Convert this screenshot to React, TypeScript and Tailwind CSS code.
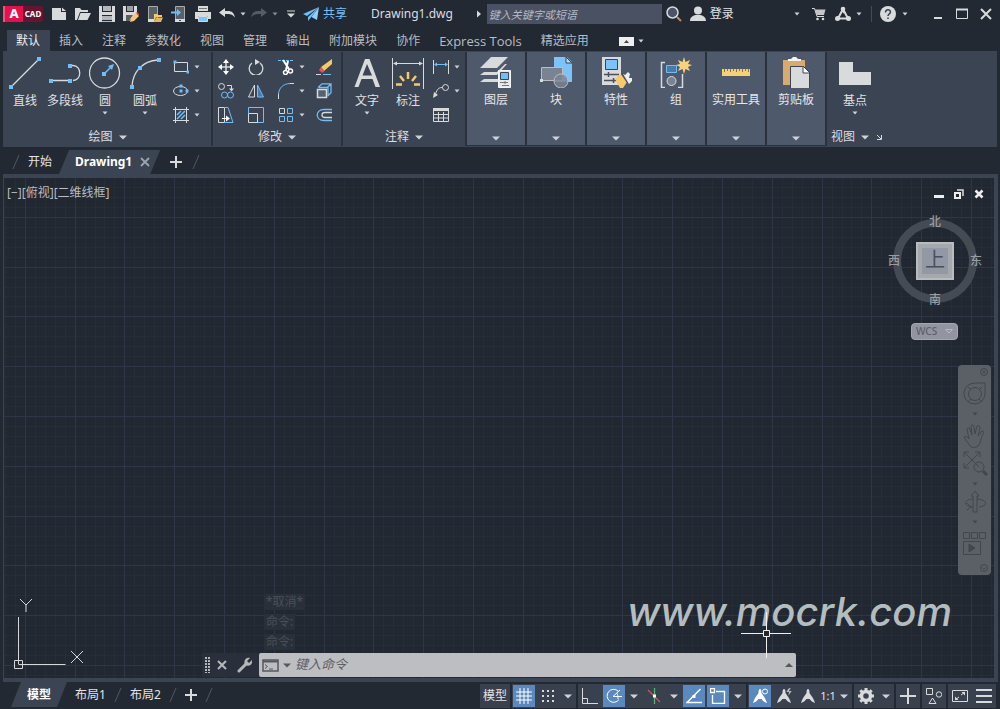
import { useState } from 'react'
import type { ReactNode } from 'react'

const LIGHT = '#d9dadb'
const BLUE = '#70bdf8'
const AMBER = '#f7c86c'
const SLATE = '#3b4453'

interface IconProps {
  w?: number
  h?: number
  children: ReactNode
}

function Icon({ w = 16, h = 16, children }: IconProps) {
  return (
    <svg width={w} height={h} viewBox={`0 0 ${w} ${h}`} fill="none" stroke={LIGHT} className="shrink-0" aria-hidden="true">
      {children}
    </svg>
  )
}

function Dots({ at, size = 4 }: { at: [number, number][]; size?: number }) {
  return (
    <>
      {at.map(([x, y]) => (
        <rect key={`${x}-${y}`} x={x - size / 2} y={y - size / 2} width={size} height={size} fill={BLUE} stroke="none" />
      ))}
    </>
  )
}

function Caret({ large = false, fill = '#d0d2d5' }: { large?: boolean; fill?: string }) {
  return large ? (
    <svg width="8" height="5" viewBox="0 0 8 5" className="shrink-0" aria-hidden="true"><path d="M0 .5h8l-4 4z" fill={fill} /></svg>
  ) : (
    <svg width="6" height="4" viewBox="0 0 6 4" className="shrink-0" aria-hidden="true"><path d="M.5.5h5l-2.500 3z" fill={fill} /></svg>
  )
}

/* ---------- Title bar ---------- */

const FILE_TOOLS: { label: string; icon: ReactNode }[] = [
  { label: '新建', icon: <Icon><path d="M1 2h9v4h5v8H1z" fill={LIGHT} stroke="none" /><path d="M11 1.5 15 5h-4z" fill={LIGHT} stroke="none" /></Icon> },
  { label: '打开', icon: <Icon><path d="M0 14V2h5l1.5 2H13v2H5L2 14z" fill={LIGHT} stroke="none" /><path d="M5.5 7H16l-3.500 7H3z" fill={LIGHT} stroke="none" /></Icon> },
  { label: '保存', icon: <Icon><path d="M0 0h3v6h10V0h3v16H0z" fill={LIGHT} stroke="none" /><path d="M4 0h8v5H4zM3 10h10v6H3z" fill="#b4b6b9" stroke="none" /><path d="M3 9.5h10M3 14.5h10" stroke="#232a34" /></Icon> },
  { label: '另存为', icon: <Icon><path d="M0 0h3v6h8V0h3v8L6 15H0z" fill={LIGHT} stroke="none" /><path d="M4 0h6v5H4z" fill="#9b9ea3" stroke="none" /><path d="M3 9h7l-4 6H3z" fill="#5a606a" stroke="none" /><path d="m7 16 1-4 5-5 3 3-5 5z" fill={AMBER} stroke="none" /><path d="m13 7 1-1 3 3-1 1z" fill="#e04a50" stroke="none" /></Icon> },
  { label: '从移动设备打开', icon: <Icon><path d="M1.5.5h9v15h-9z" fill="#5a606a" stroke="#aaa" /><path d="M1 13h6v3H1z" fill={LIGHT} stroke="none" /><path d="M7 8h3l1 1h4v2H9l-2 5z" fill={AMBER} stroke="none" /><path d="M9.5 11.5H16L14 16H7z" fill="#e5b55f" stroke="none" /></Icon> },
  { label: '保存到移动设备', icon: <Icon><path d="M4.5.5h9v15h-9z" fill="#5a606a" stroke="#aaa" /><path d="M4 13h10v3H4z" fill={LIGHT} stroke="none" /><path d="M8 14.5h2" stroke="#444" /><path d="M0 6.5h7" stroke={BLUE} strokeWidth="2" /><path d="m6 3 4 3.5L6 10z" fill={BLUE} stroke="none" /></Icon> },
  { label: '打印', icon: <Icon><path d="M3 0h10v5H3zM0 6h16v7h-3v-3H3v3H0z" fill={LIGHT} stroke="none" /><path d="M4 2.5h8" stroke="#777" /><path d="M3.5 10.5h9v5h-9z" fill="#7cc6ff" stroke={LIGHT} /></Icon> },
]

function TitleBar() {
  return (
    <header className="flex h-7 items-center pl-[3px]">
      <button aria-label="AutoCAD" className="mr-1 flex h-4 w-10 items-center rounded-xs bg-[#6a1330] text-white">
        <span className="flex h-full w-5 items-center justify-center border-l-2 border-[#f0527a] bg-[#e5104e] text-[13px] font-extrabold">A</span>
        <span className="flex-1 text-center text-[8px] font-bold">CAD</span>
      </button>
      {FILE_TOOLS.map((tool) => (
        <button key={tool.label} aria-label={tool.label} className="flex h-6 w-6 items-center justify-center">{tool.icon}</button>
      ))}
      <button aria-label="放弃" className="flex h-6 w-6 items-center justify-center">
        <Icon><path d="M0 6.5 6 2v3h3c4 0 6 2 7 6.500C14 9 12 8 9 8H6v3z" fill={LIGHT} stroke="none" /></Icon>
      </button>
      <button aria-label="放弃列表" className="flex w-2 justify-center"><Caret /></button>
      <button aria-label="重做" className="flex h-6 w-6 items-center justify-center">
        <Icon><path d="M16 6.5 10 2v3H7c-4 0-6 2-7 6.500C2 9 4 8 7 8h3v3z" fill="#545c68" stroke="none" /></Icon>
      </button>
      <button aria-label="重做列表" className="flex w-2 justify-center opacity-60"><Caret /></button>
      <button aria-label="自定义快速访问工具栏" className="flex h-6 w-6 items-center justify-center">
        <Icon w={8} h={8}><path d="M0 1h8" /><path d="M0 3.5h8l-4 4z" fill={LIGHT} stroke="none" /></Icon>
      </button>
      <button className="flex items-center gap-1 text-[12px] leading-4 text-[#78bdf0]">
        <Icon><path d="M16 1 0 8l4 2zM16 1 5 11v4l2.500-3z" fill={BLUE} stroke="none" /><path d="m16 1-2 13-5.500-3z" fill="#8fd0ff" stroke="none" /></Icon>
        共享
      </button>
      <h1 className="ml-6 text-[12px] leading-4 text-[#dcdde0]">Drawing1.dwg</h1>
      <div className="ml-6 flex items-center gap-1.5">
        <svg width="4" height="8" viewBox="0 0 4 8" aria-hidden="true"><path d="M0 .5 4 4 0 7.5z" fill={LIGHT} /></svg>
        <input
          type="text"
          aria-label="搜索"
          placeholder="键入关键字或短语"
          className="h-5 w-[175px] bg-[#495163] px-0.5 text-[11px] italic text-white outline-none placeholder:text-[#b5bac4]"
        />
      </div>
      <button aria-label="查找" className="flex h-6 w-6 items-center justify-center">
        <Icon><circle cx="6.5" cy="6.5" r="5.5" fill="#4c5565" strokeWidth="1.5" /><path d="m11 11 4 4" stroke="#c98a4e" strokeWidth="2" /></Icon>
      </button>
      <button className="ml-1 flex items-center gap-1 text-[12px] leading-4 text-[#e3e4e6]">
        <Icon><circle cx="8" cy="4.5" r="4" fill={LIGHT} stroke="none" /><path d="M0 15c0-4 3-5 5-6h6c2 1 5 2 5 6z" fill={LIGHT} stroke="none" /></Icon>
        登录
      </button>
      <div className="ml-auto flex items-center pr-1">
        <button aria-label="帐户" className="mr-1 flex w-3 justify-center"><Caret /></button>
        <button aria-label="应用商店" className="flex h-6 w-6 items-center justify-center">
          <Icon w={14} h={14}><path d="M0 1.5h2.500L5 9.5h7" /><path d="M3 2.5h10.500L12 8H4.500z" fill="#c4c6c9" stroke="none" /><circle cx="5.5" cy="12" r="1.3" fill={LIGHT} stroke="none" /><circle cx="11" cy="12" r="1.3" fill={LIGHT} stroke="none" /></Icon>
        </button>
        <button aria-label="Autodesk" className="flex h-6 w-6 items-center justify-center">
          <Icon><path d="M8 3 3 12.5h10zM8 3l1 4" strokeWidth="2" /><circle cx="8" cy="3" r="2.3" fill={LIGHT} stroke="none" /><circle cx="2.5" cy="12.5" r="2.5" fill={LIGHT} stroke="none" /><circle cx="13.5" cy="12.5" r="2.5" fill={LIGHT} stroke="none" /></Icon>
        </button>
        <button aria-label="Autodesk 列表" className="flex w-2 justify-center"><Caret /></button>
        <span className="mx-2 h-4 w-px bg-[#454c58]" />
        <button aria-label="帮助" className="flex h-6 items-center gap-1.5">
          <Icon><circle cx="8" cy="8" r="8" fill={LIGHT} stroke="none" /><path d="M5.5 6.5c0-3.500 5-3.500 5-.5 0 2-2.500 1.800-2.500 4M8 11.5V13" stroke={SLATE} strokeWidth="1.5" /></Icon>
          <Caret />
        </button>
        <button aria-label="最小化" className="ml-4 flex h-6 w-6 items-center justify-center pl-1"><Icon w={8} h={12}><path d="M0 10h8" strokeWidth="2" /></Icon></button>
        <button aria-label="最大化" className="flex h-6 w-6 items-center justify-center pl-1"><Icon w={12} h={12}><path d="M.5 1.5h11v9H.5z" /><path d="M0 1.5h12" strokeWidth="2" /></Icon></button>
        <button aria-label="关闭" className="flex h-6 w-6 items-center justify-center pl-1"><Icon w={12} h={12}><path d="m1 1 10 10m0-10L1 11" strokeWidth="2" /></Icon></button>
      </div>
    </header>
  )
}

/* ---------- Ribbon ---------- */

const RIBBON_TABS = ['默认', '插入', '注释', '参数化', '视图', '管理', '输出', '附加模块', '协作', 'Express Tools', '精选应用']

function RibbonTabs({ active, onSelect }: { active: string; onSelect: (t: string) => void }) {
  return (
    <nav className="flex h-[23px] items-end pl-[7px]">
      {RIBBON_TABS.map((tab) => (
        <button
          key={tab}
          onClick={() => onSelect(tab)}
          className={`h-[21px] pt-px pr-[10px] pl-[9px] leading-5 whitespace-nowrap ${
            tab === active ? 'bg-[#3b4453] text-[#eceded]' : 'text-[#b9bcc1]'
          } ${tab === 'Express Tools' ? "font-['Open_Sans',sans-serif] text-[13px]" : 'text-[12px]'}`}
        >
          {tab}
        </button>
      ))}
      <button aria-label="最小化功能区" className="ml-5 flex h-5 items-center gap-1">
        <Icon w={15} h={9}><rect width="15" height="9" fill="#eee" stroke="none" /><path d="m5 6 2.500-3L10 6z" fill="#444" stroke="none" /></Icon>
        <Caret />
      </button>
    </nav>
  )
}

interface ToolProps {
  label: string
  icon: ReactNode
  menu?: boolean
}

function LargeTool({ label, icon, menu = false }: ToolProps) {
  return (
    <button className="flex w-10 flex-col items-center pt-[5px] text-[12px] leading-4 whitespace-nowrap text-[#e0e1e3]">
      {icon}
      <span className="mt-1">{label}</span>
      {menu && <span className="mt-0.5"><Caret /></span>}
    </button>
  )
}

function SmallTool({ label, icon, menu = false }: ToolProps) {
  return (
    <div className="flex h-6 items-center">
      <button aria-label={label} className="flex h-6 w-6 items-center justify-center">{icon}</button>
      {menu && <button aria-label={`${label}列表`} className="flex w-2 justify-center"><Caret /></button>}
    </div>
  )
}

function Panel({ title, children }: { title: string; children: ReactNode }) {
  return (
    <section className="flex flex-col border-r-2 border-[#2a313c] bg-[#3b4453]">
      <div className="flex flex-1">{children}</div>
      <button className="flex h-[18px] items-center justify-center gap-1.5 text-[12px] leading-4 text-[#dcdde0]">
        {title}
        <Caret large />
      </button>
    </section>
  )
}

function FoldedPanel({ title, icon }: { title: string; icon: ReactNode }) {
  return (
    <button className="mb-px flex w-[58px] flex-col items-center bg-[#4e596c] pt-1 pb-1 text-[12px] leading-4 whitespace-nowrap text-[#e6e7e9]">
      {icon}
      <span className="mt-1">{title}</span>
      <span className="mt-auto"><Caret large /></span>
    </button>
  )
}

function DrawPanel() {
  return (
    <Panel title="绘图">
      <div className="flex gap-1 pr-2.5 pl-px">
        <div className="flex">
          <LargeTool label="直线" icon={<Icon w={32} h={32}><path d="M3 29 29 3" strokeWidth="1.3" /><Dots at={[[2, 30], [30, 2]]} /></Icon>} />
          <LargeTool label="多段线" icon={<Icon w={32} h={32}><path d="M2 23.5h20M21 8.5h3c9 0 9 15 0 15" strokeWidth="1.3" /><Dots at={[[2, 24], [21, 24], [21, 9]]} /></Icon>} />
          <LargeTool menu label="圆" icon={<Icon w={32} h={32}><circle cx="15.5" cy="16" r="15" strokeWidth="1.3" /><path d="m15 17 7-7" stroke={BLUE} strokeWidth="1.5" /><path d="m25 7-6 2 4 4z" fill={BLUE} stroke="none" /><Dots at={[[15, 17]]} /></Icon>} />
          <LargeTool menu label="圆弧" icon={<Icon w={32} h={32}><path d="M3 29C4 15 13 4 29 3" strokeWidth="1.3" /><Dots at={[[3, 30], [11, 11], [30, 3]]} /></Icon>} />
        </div>
        <div className="flex flex-col pt-[3px]">
          <SmallTool menu label="矩形" icon={<Icon><path d="M1.5 3.5h13v9h-13z" /><Dots at={[[2, 3], [15, 13]]} size={3} /></Icon>} />
          <SmallTool menu label="椭圆" icon={<Icon><ellipse cx="7.5" cy="8" rx="7" ry="4.5" /><Dots at={[[8, 3], [8, 8], [14, 8]]} size={3} /></Icon>} />
          <SmallTool menu label="图案填充" icon={<Icon><path d="M0 2.5h16M0 13.5h16M2.5 0v16M13.5 0v16" /><path d="m4 8 4-4M4 12l8-8M8 12l4-4" stroke={BLUE} strokeWidth="1.5" /></Icon>} />
        </div>
      </div>
    </Panel>
  )
}

function ModifyPanel() {
  return (
    <Panel title="修改">
      <div className="flex gap-1.5 pt-[3px] pr-[5px] pl-px">
        <div>
          <SmallTool label="移动" icon={<Icon><path d="M8 2v12M2 8h12" strokeWidth="1.5" /><path d="m8 0 3 4H5zM8 16l3-4H5zM0 8l4-3v6zM16 8l-4-3v6z" fill="#fff" stroke="none" /></Icon>} />
          <SmallTool label="复制" icon={<Icon><circle cx="3.5" cy="3.5" r="3" /><path d="M9 2.5h4.500V6" /><path d="m11 5.5 2.500 3 2.500-3z" fill={LIGHT} stroke="none" /><g stroke={BLUE}><circle cx="6.5" cy="12" r="3" /><circle cx="12.5" cy="12" r="3" /></g></Icon>} />
          <SmallTool label="拉伸" icon={<Icon><path d="M.5.5h6v15h-6z" /><path d="M6 .5h4l5 15H6" stroke={BLUE} /><path d="M4 11.5h5" stroke="#fff" /><path d="m8 8.5 4 3-4 3z" fill="#fff" stroke="none" /></Icon>} />
        </div>
        <div>
          <SmallTool label="旋转" icon={<Icon><path d="M4 4a6.800 6.800 0 1 0 8 0" strokeWidth="1.3" /><path d="m7 0 5 3-5 3z" fill={LIGHT} stroke="none" /></Icon>} />
          <SmallTool label="镜像" icon={<Icon><path d="M6.5 2v12h-6z" /><path d="M9.5 2v12h6z" stroke={BLUE} fill="#477aa5" /></Icon>} />
          <SmallTool label="缩放" icon={<Icon><path d="M.5 6V.5h15v15H9" stroke={BLUE} /><path d="M.5 6.5h9v9h-9z" /></Icon>} />
        </div>
        <div>
          <SmallTool menu label="修剪" icon={<Icon><path d="M0 1.5h16" stroke={BLUE} strokeDasharray="3 1" /><path d="m5 1 6 9M10 2 8 11" stroke="#fff" strokeWidth="2" /><circle cx="12.5" cy="12" r="2" stroke="#fff" strokeWidth="1.5" /><circle cx="7.5" cy="13.5" r="2" stroke="#fff" strokeWidth="1.5" /></Icon>} />
          <SmallTool menu label="圆角" icon={<Icon><path d="M.5 16v-5M12 .5h4" /><path d="M.5 11C1 5 5 .8 12 .5" stroke={BLUE} /></Icon>} />
          <SmallTool menu label="阵列" icon={<Icon><path d="M1.5 1.5h5v5h-5z" /><path d="M9.5 1.5h5v5h-5zM1.5 9.5h5v5h-5zM9.5 9.5h5v5h-5z" stroke={BLUE} /></Icon>} />
        </div>
        <div>
          <SmallTool label="删除" icon={<Icon><path d="M16 0v5L8 12 5 8z" fill={AMBER} stroke="none" /><path d="m5 8 3.500 4L6 14l-3-3z" fill="#e2565c" stroke="none" /><path d="M0 15.5h5" /><path d="M7 15.5h8" stroke={BLUE} /></Icon>} />
          <SmallTool label="分解" icon={<Icon><path d="M1.500 6.500h9v8h-9z" fill="#566070" strokeWidth="1.5" /><path d="M2 4.500 6 .8h9v9l-3.500 3.500M15 .8l-4 4M3 4.500h9v9" stroke={BLUE} strokeWidth="1.3" /></Icon>} />
          <SmallTool label="偏移" icon={<Icon><path d="M16 2.500H8c-9 0-9 11 0 11h8" stroke={BLUE} strokeWidth="1.3" /><path d="M16 5.500H9c-4 0-4 5 0 5h7" strokeWidth="1.3" /></Icon>} />
        </div>
      </div>
    </Panel>
  )
}

function AnnotatePanel() {
  return (
    <Panel title="注释">
      <div className="flex gap-px px-1">
        <LargeTool menu label="文字" icon={<Icon w={32} h={32}><path d="M14 2h4.500l10.500 28h-4.500l-3-8h-11l-3 8H3.500zm2 5-4.500 11.500h9.500z" fill={LIGHT} stroke="none" /></Icon>} />
        <LargeTool label="标注" icon={<Icon w={32} h={32}><path d="M.5 1v31M31.500 1v31M2 6.500h28" /><path d="m1 6.500 4-2v4zM31 6.500l-4-2v4z" fill={LIGHT} stroke="none" /><path d="M16 15v7M8 19l4 5M24 19l-4 5M4 27.500h6M22 27.500h6" stroke={AMBER} strokeWidth="2.5" /></Icon>} />
        <div className="pt-[3px]">
          <SmallTool menu label="线性标注" icon={<Icon><path d="M.5 1v14M15.500 1v14" /><path d="M2 5.500h12" stroke={BLUE} /><path d="m1 5.500 3-2v4zM15 5.500l-3-2v4z" fill={BLUE} stroke="none" /></Icon>} />
          <SmallTool menu label="引线" icon={<Icon><circle cx="12.5" cy="4.5" r="3" /><path d="M9.500 4.500C4 4.500 4 8 2 12" /><path d="m0 15 1-6 4 3z" fill={LIGHT} stroke="none" /></Icon>} />
          <SmallTool label="表格" icon={<Icon><path d="M.5 2.500h15v12H.5zM.5 7.500h15M.5 11h15M5.500 5v9M10.500 5v9" /><path d="M0 2.500h16" strokeWidth="3" /></Icon>} />
        </div>
      </div>
    </Panel>
  )
}

const FOLDED: { title: string; icon: ReactNode }[] = [
  {
    title: '图层',
    icon: (
      <Icon w={32} h={32}>
        <path d="M11 1h17L17 12H0zM4 16h13l8-8h2L17 19H0zM4 23h14v3H0z" fill={LIGHT} stroke="none" />
        <path d="M18.500 14.500h12v17h-12z" fill="#e8e9ea" stroke="#f4f4f4" />
        <path d="M20.500 16.500h8v7h-8z" fill={BLUE} stroke={SLATE} />
        <path d="M20 26.500h8M22 29.500h7M25 25v3" stroke="#777" />
      </Icon>
    ),
  },
  {
    title: '块',
    icon: (
      <Icon w={32} h={32}>
        <path d="M14 1h13l5 5v20H14z" fill="#7dc3fb" stroke="none" />
        <path d="M26 1v6h6z" fill="#b6dfff" stroke={SLATE} />
        <path d="M1.500 11.500h21v13h-21z" fill="#7a8391" stroke="#b9bdc4" />
        <circle cx="21" cy="25" r="7" fill="#7a8391" fillOpacity=".8" stroke="#b9bdc4" />
        <rect x="0" y="23" width="3" height="3" fill={LIGHT} stroke="none" />
      </Icon>
    ),
  },
  {
    title: '特性',
    icon: (
      <Icon w={32} h={32}>
        <path d="M2 1h19v28H2z" fill={LIGHT} stroke="none" />
        <path d="M5.500 3.500h12v10h-12z" fill="#7dc3fb" stroke={SLATE} />
        <path d="M4 18.500h15M4 24.500h12M8.500 16v5M13.500 22v5" stroke="#4a515c" strokeWidth="1.5" />
        <path d="m15 23 6-5 6 8-4 6h-3z" fill={AMBER} stroke="none" />
        <path d="m21 18 2-1 6 9-2 1z" fill="#4a515c" stroke="none" />
        <path d="m23 18 2 1 3-3 2 2-1 4 3 0v3l-3 3z" fill="#eee" stroke="none" />
      </Icon>
    ),
  },
  {
    title: '组',
    icon: (
      <Icon w={32} h={32}>
        <path d="M5 6.500H1.500v25H5M18 31.500h4.500V18" strokeWidth="1.5" />
        <path d="M6.500 9.500h10v7h-10z" fill="#4b7ba3" stroke={BLUE} />
        <circle cx="11.5" cy="25" r="4.5" fill="#7a8391" />
        <path d="m24 1 1.500 5L30 4l-2 4 4 1-4 2 2 4-4.500-2L24 18l-1.500-5-4.500 2 2-4-4-2 4-1-2-4 4.500 2z" fill="#f9d27e" stroke="none" />
      </Icon>
    ),
  },
  {
    title: '实用工具',
    icon: (
      <Icon w={32} h={32}>
        <path d="M2 13h28v7H2z" fill="#f7cf74" stroke="none" />
        <path d="M4.500 13v3M7.500 13v2M10.500 13v3M13.500 13v2M16.500 13v3M19.500 13v2M22.500 13v3M25.500 13v2M28.500 13v3" stroke="#8a7440" />
      </Icon>
    ),
  },
  {
    title: '剪贴板',
    icon: (
      <Icon w={32} h={32}>
        <path d="M3 4h22v25H3z" fill="#d8aa6d" stroke="none" />
        <path d="M8 5V3h3l2-2h3l2 2h3v2z" fill="#f4f4f4" stroke="none" />
        <path d="M10.500 10.500h12l7 6V33h-19z" fill={LIGHT} stroke={SLATE} />
        <path d="M23 10v7h7z" fill="#fff" stroke={SLATE} />
      </Icon>
    ),
  },
]

function Ribbon() {
  return (
    <div className="mx-[3px] flex h-24 border border-[#3b4453] bg-[#2a313c]">
      <DrawPanel />
      <ModifyPanel />
      <AnnotatePanel />
      <div className="flex gap-0.5">
        {FOLDED.map((panel) => <FoldedPanel key={panel.title} {...panel} />)}
      </div>
      <section className="ml-0.5 flex flex-1 flex-col bg-[#3b4453]">
        <div className="flex flex-1 pl-2">
          <LargeTool menu label="基点" icon={<Icon w={32} h={32}><path d="M0 5h14v10h18v13H0z" fill={LIGHT} stroke="none" /></Icon>} />
        </div>
        <div className="flex h-[18px] items-center gap-2 pl-1 text-[12px] leading-4 text-[#dcdde0]">
          <button className="flex items-center gap-1.5">视图<Caret large /></button>
          <button aria-label="视图设置"><Icon w={5} h={5}><path d="m0 0 4 4M4.500 0v4.500H0" /></Icon></button>
        </div>
      </section>
    </div>
  )
}

/* ---------- Document tabs ---------- */

function Slash() {
  return <Icon w={8} h={16}><path d="M7 1 1 15" stroke="#505763" /></Icon>
}

function DocumentTabs() {
  return (
    <div className="flex h-[27px] items-end pl-3 text-[12px] leading-6 text-[#e3e4e6]">
      <div className="flex h-6 items-center gap-2">
        <Slash />
        <button>开始</button>
      </div>
      <div className="ml-[7px] flex h-6 items-center gap-2 bg-[#3b4453] pr-2.5 pl-4 [clip-path:polygon(10px_0,100%_0,calc(100%-10px)_100%,0_100%)]">
        <button className="font-bold text-white">Drawing1</button>
        <button aria-label="关闭 Drawing1"><Icon w={10} h={10}><path d="m1 1 8 8m0-8L1 9" stroke="#9ea3ac" strokeWidth="1.8" /></Icon></button>
      </div>
      <div className="flex h-6 items-center gap-2.5 pl-2.5">
        <button aria-label="新图形"><Icon w={12} h={12}><path d="M6 0v12M0 6h12" strokeWidth="2" /></Icon></button>
        <Slash />
      </div>
    </div>
  )
}

/* ---------- Drawing area ---------- */

const STEP = 9.96

function gridPath(first: number, count: number, vertical: boolean, skipMajor: boolean) {
  let d = ''
  for (let i = 0; i < count; i++) {
    if (skipMajor && i % 5 === 0) continue
    const p = Math.round(first + i * (skipMajor ? STEP : STEP * 5)) + 0.5
    d += vertical ? `M${p} 0V3000` : `M0 ${p}H4000`
  }
  return d
}

function Grid() {
  return (
    <svg className="absolute inset-0 h-full w-full" aria-hidden="true">
      <path d={gridPath(-29, 400, true, true) + gridPath(-11, 300, false, true)} stroke="#262d38" />
      <path d={gridPath(-29, 80, true, false) + gridPath(-11, 60, false, false)} stroke="#2f3647" />
    </svg>
  )
}

function ViewCube() {
  return (
    <div className="absolute top-9 right-3 flex w-[94px] flex-col items-center text-[12px] leading-4 font-medium text-[#989da4]">
      <svg width="86" height="86" viewBox="0 0 86 86" className="absolute top-1" aria-hidden="true"><circle cx="43" cy="43" r="38" fill="none" stroke="#454a53" strokeWidth="8" /></svg>
      <button className="relative">北</button>
      <div className="relative flex w-full items-center justify-between py-3">
        <button>西</button>
        <button className="h-[38px] w-[38px] border-2 border-[#b9bbbe] bg-[#a5a8ad] p-1">
          <span className="block h-full bg-[#9299a4] text-center text-[20px] leading-6 font-normal text-[#4a505a]">上</span>
        </button>
        <button>东</button>
      </div>
      <button className="relative">南</button>
    </div>
  )
}

const NAV = '#42464d'

function NavigationBar() {
  return (
    <div className="absolute top-[187px] right-[3px] flex w-[33px] flex-col items-center gap-0.5 rounded-sm bg-[#5b5f66] py-[3px]">
      <button aria-label="关闭导航栏" className="self-end px-[3px]"><Icon w={8} h={8}><g stroke={NAV}><circle cx="4" cy="4" r="3.5" /><path d="m2.500 2.500 3 3m0-3-3 3" /></g></Icon></button>
      <button aria-label="全导航控制盘" className="mt-1"><Icon w={24} h={24}><g stroke={NAV}><path d="M12 1h10v11A10.500 10.500 0 1 1 12 1z" /><circle cx="12" cy="12" r="6.5" /><path d="m5 5 3 3M19 5l-3 3M8 17l-3 3M16 17l3 3" /></g></Icon></button>
      <span className="mt-1 mb-1.5"><Caret fill={NAV} /></span>
      <button aria-label="平移"><Icon w={24} h={24}><path d="M7 22C5 18 2 16 1 13c2-2 4 1 5 2L4 5c1-2 3-1 3 1l2 5-1-9c1-2 3-1 3 1l1 7 2-8c2-1 3 0 3 2l-2 8 4-5c2 0 2 1 1 3-3 5-2 9-5 12-3 2-6 2-8 0z" stroke={NAV} /></Icon></button>
      <button aria-label="范围缩放"><Icon w={26} h={26}><g stroke={NAV}><path d="m2 2 15 15M18 2 2 18M2 7V2h5M13 2h5v5M2 13v5h5" /><circle cx="17" cy="17" r="5" /><path d="m21 21 4 4" strokeWidth="3" /></g></Icon></button>
      <span className="mt-1 mb-0.5"><Caret fill={NAV} /></span>
      <button aria-label="动态观察"><Icon w={24} h={24}><g stroke={NAV}><path d="m12 1 4 5h-2v16h-4V6H8z" /><path d="M10 17C0 16 0 10 10 9M14 9c11 1 11 7 2 8M4 13l4 4-4 3" /></g></Icon></button>
      <span className="my-1"><Caret fill={NAV} /></span>
      <button aria-label="ShowMotion" className="mt-0.5"><Icon w={24} h={24}><g stroke={NAV}><path d="M.5.5h6v6h-6zM8.500.5h6v6h-6zM16.500.5h6v6h-6zM.5 9.500h17v13H.5z" /><path d="m6 12 6 4-6 4z" fill={NAV} /></g></Icon></button>
      <button aria-label="导航栏选项" className="mt-1.5 self-end px-[3px]"><Icon w={8} h={8}><g stroke={NAV}><circle cx="4" cy="4" r="3.5" /><path d="m2.500 3.500 1.500 2 1.500-2" /></g></Icon></button>
    </div>
  )
}

function CommandLine() {
  return (
    <div className="absolute right-[198px] bottom-px left-[198px]">
      <ul className="mb-[3px] flex flex-col items-start gap-1 pl-[62px] text-[12px] leading-4 text-[#4a4f58]">
        {['*取消*', '命令:', '命令:'].map((line, i) => (
          <li key={i} className="rounded-xs bg-[#2a3039] px-0.5">{line}</li>
        ))}
      </ul>
      <div className="flex h-6 items-center bg-[#2a303b]">
        <div className="flex w-[57px] items-center pl-[3px]">
          <Icon w={6} h={16}><path d="M1 0v16M4 0v16" stroke="#b5b7ba" strokeWidth="2" strokeDasharray="2 1" /></Icon>
          <button aria-label="关闭命令行" className="ml-1.5"><Icon w={10} h={10}><path d="m1 1 8 8m0-8L1 9" stroke="#b5b7ba" strokeWidth="2" /></Icon></button>
          <button aria-label="自定义" className="ml-2.5"><Icon w={15} h={16}><path d="M2 14 9 7" stroke="#b5b7ba" strokeWidth="3" strokeLinecap="round" /><path d="M8 8C6 4 9 0 13 1l-3 3 2 2 3-3c1 5-3 7-7 5z" fill="#b5b7ba" stroke="none" /></Icon></button>
        </div>
        <div className="flex h-full flex-1 items-center gap-1 rounded-xs bg-[#bdbec1] px-[3px]">
          <button aria-label="最近使用的命令" className="flex items-center gap-1">
            <Icon w={17} h={13}><path d="M1 1h15v11H1z" stroke="#55585d" strokeWidth="1.5" /><path d="M1 2.500h15" stroke="#55585d" strokeWidth="2" /><path d="m3 5.500 2.500 2-2.500 2M7 10h4" stroke="#55585d" /></Icon>
            <Caret large fill="#55585d" />
          </button>
          <input
            type="text"
            aria-label="命令"
            placeholder="键入命令"
            className="min-w-0 flex-1 bg-transparent text-[13px] italic text-[#333] outline-none placeholder:text-[#5d6066]"
          />
          <button aria-label="展开命令历史"><Icon w={8} h={4}><path d="m0 4 4-4 4 4z" fill="#55585d" stroke="none" /></Icon></button>
        </div>
      </div>
    </div>
  )
}

function DrawingArea() {
  return (
    <main className="relative mr-0.5 ml-[3px] min-h-[400px] flex-1 overflow-hidden border-4 border-l border-[#3b4453] bg-[#212831]">
      <Grid />
      <div className="relative flex items-start justify-between pt-[7px] pr-2.5 pl-[3px]">
        <div className="flex text-[12px] leading-4 text-[#b9bcc1]">
          <button>[−]</button>
          <button>[俯视]</button>
          <button>[二维线框]</button>
        </div>
        <div className="flex gap-2.5 pt-1">
          <button aria-label="最小化视口"><Icon w={10} h={10}><path d="M0 7.500h10" stroke="#eee" strokeWidth="3" /></Icon></button>
          <button aria-label="还原视口"><Icon w={10} h={10}><path d="M3 1h6v6" stroke="#ddd" strokeWidth="1.5" /><path d="M1 4h5v5H1z" stroke="#eee" strokeWidth="2" /></Icon></button>
          <button aria-label="关闭视口"><Icon w={10} h={10}><path d="m1.500 1.500 7 7m0-7-7 7" stroke="#eee" strokeWidth="2.5" /></Icon></button>
        </div>
      </div>
      <ViewCube />
      <button className="absolute top-[145px] right-9 flex h-[17px] w-[47px] items-center justify-between rounded-sm border border-[#a4a6b2] bg-[#9294a1] px-1 text-[10px] font-medium text-[#5d606b]">
        WCS
        <Icon w={8} h={5}><path d="M.5.5h7L4 4z" stroke="#b5b7c4" /></Icon>
      </button>
      <NavigationBar />
      <svg width="76" height="76" viewBox="0 0 76 76" fill="none" stroke="#d5d7da" className="absolute bottom-2 left-[9px]" aria-hidden="true">
        <path d="M5.500 23v47M5.500 70.500h47" />
        <path d="M1.500 66.500h8v8h-8z" />
        <path d="m7 5 6 6v7m0-7 6-6M58 57l12 12m0-12L58 69" />
      </svg>
      <p className="absolute right-[42px] bottom-9 font-['Inter',sans-serif] text-[40px] leading-[60px] font-medium text-[#b3bdbf] italic">www.mocrk.com</p>
      <CommandLine />
      <svg width="50" height="50" viewBox="0 0 50 50" fill="none" stroke="#f0f0f0" className="absolute right-[203px] bottom-5" aria-hidden="true">
        <path d="M0 25.500h22M29 25.500h21M25.500 4v18M25.500 29v21M22.500 22.500h6v6h-6z" />
      </svg>
    </main>
  )
}

/* ---------- Status bar ---------- */

function StatusButton({ label, on = false, children }: { label: string; on?: boolean; children: ReactNode }) {
  return (
    <button
      aria-label={label}
      aria-pressed={on}
      className={`mx-px flex h-[22px] w-[22px] items-center justify-center ${on ? 'bg-[#5b89bd]' : ''}`}
    >
      {children}
    </button>
  )
}

function StatusCaret({ label }: { label: string }) {
  return <button aria-label={label} className="flex h-full w-4 items-center justify-center"><Caret large /></button>
}

function StatusGroup({ children }: { children: ReactNode }) {
  return <div className="flex h-6 items-center bg-[#39414f]">{children}</div>
}

const MAN = 'M8 1c1 0 1.500 1 1.500 4 2 3 4 5 5.500 10-2.500-1-4-2-5.500-4h-3C5 13 3.500 14 1 15c1.500-5 3.500-7 5.500-10C6.500 2 7 1 8 1z'

function StatusBar() {
  return (
    <footer className="flex h-[27px] items-start justify-between pr-1 pl-[11px] text-[12px] text-[#e3e4e6]">
      <div className="flex h-[25px] items-center whitespace-nowrap">
        <button className="h-[25px] bg-[#3b4453] px-4 font-bold text-white [clip-path:polygon(10px_0,100%_0,calc(100%-10px)_100%,0_100%)]">模型</button>
        <div className="flex items-center gap-2 pl-2">
          <button>布局1</button>
          <Slash />
          <button>布局2</button>
          <Slash />
          <button aria-label="新建布局"><Icon w={12} h={12}><path d="M6 0v12M0 6h12" strokeWidth="2" /></Icon></button>
          <Slash />
        </div>
      </div>
      <div className="flex gap-0.5 pt-0.5">
        <StatusGroup><button className="w-[30px] whitespace-nowrap">模型</button></StatusGroup>
        <StatusGroup>
          <StatusButton on label="栅格"><Icon><path d="M4 0v16M8 0v16M12 0v16M0 4h16M0 8h16M0 12h16" stroke="#fff" /></Icon></StatusButton>
          <StatusButton label="捕捉"><Icon w={14} h={14}><path d="M1 2h12M1 7h12M1 12h12" strokeWidth="2" strokeDasharray="2 3" /></Icon></StatusButton>
          <StatusCaret label="捕捉设置" />
        </StatusGroup>
        <StatusGroup>
          <StatusButton label="正交"><Icon><path d="M.5 0v15.500H16M.5 10.500h5v5" /></Icon></StatusButton>
          <StatusButton on label="极轴追踪"><Icon><g stroke="#fff"><path d="M13 11.500A6.500 6.500 0 1 1 12 3M7 8.500h9M7 8.500 14 2M10.500 5c1 1 1.500 2 1.500 6" /></g></Icon></StatusButton>
          <StatusCaret label="极轴设置" />
          <StatusButton label="等轴测草图"><Icon><path d="m2 2 12 12" stroke="#c95a5a" strokeWidth="1.3" /><path d="M8.500 0v16" stroke="#53b27a" strokeWidth="1.3" /><rect x="7" y="6.500" width="3" height="3" fill="#fff" stroke="none" /></Icon></StatusButton>
          <StatusCaret label="等轴测设置" />
          <StatusButton on label="对象捕捉追踪"><Icon><path d="M14.500 1 1 14.500h15" stroke="#fff" strokeWidth="1.3" /><path d="M6.500 7h3v3h-3z" fill="#fff" stroke="none" /></Icon></StatusButton>
          <StatusButton on label="对象捕捉"><Icon><path d="M6 3.500h8.500v12h-12V7M.5.5h4v4h-4z" stroke="#fff" strokeWidth="1.3" /></Icon></StatusButton>
          <StatusCaret label="对象捕捉设置" />
        </StatusGroup>
        <StatusGroup>
          <StatusButton on label="显示注释对象"><Icon><path d={MAN} fill="#fff" stroke="none" /><circle cx="13" cy="3.5" r="2.5" fill="#5b89bd" stroke="#fff" /></Icon></StatusButton>
          <StatusButton label="自动缩放"><Icon><path d={MAN} fill={LIGHT} stroke="none" /><path d="m13 0-3 4h3l-1 4 4-5h-3l2-3z" fill={LIGHT} stroke="#39414f" strokeWidth=".5" /></Icon></StatusButton>
          <StatusButton label="注释比例对象"><Icon><path d={MAN} fill={LIGHT} stroke="none" /></Icon></StatusButton>
          <button className="w-4 text-center text-[11px] whitespace-nowrap">1:1</button>
          <StatusCaret label="注释比例" />
        </StatusGroup>
        <StatusGroup>
          <StatusButton label="切换工作空间"><Icon><circle cx="8" cy="8" r="4.5" strokeWidth="3.5" /><path d="M8 0v3M8 13v3M0 8h3M13 8h3M2.300 2.300l2 2m7.400 7.400 2 2m0-11.400-2 2m-7.400 7.400-2 2" strokeWidth="3" /></Icon></StatusButton>
          <StatusCaret label="工作空间" />
        </StatusGroup>
        <StatusGroup><StatusButton label="注释监视器"><Icon><path d="M8 0v16M0 8h16" strokeWidth="2" /></Icon></StatusButton></StatusGroup>
        <StatusGroup><StatusButton label="隔离对象"><Icon><path d="M.5.5h6v6h-6zM6.500 10 3 15.500h7z" /><circle cx="13" cy="6.5" r="2.7" /></Icon></StatusButton></StatusGroup>
        <StatusGroup>
          <StatusButton label="全屏显示"><Icon><path d="M.5 2.500h15v11H.5z" /><path d="m9 7 4-3M7 9l-4 3" /><path d="M9.500 4H13v3.500zM3 8.500V12h3.500z" fill={LIGHT} stroke="none" /></Icon></StatusButton>
          <StatusButton label="自定义"><Icon><path d="M0 2h16M0 8h16M0 14h16" strokeWidth="2" /></Icon></StatusButton>
        </StatusGroup>
      </div>
    </footer>
  )
}

export default function App() {
  const [tab, setTab] = useState('默认')

  return (
    <div className="flex min-h-screen min-w-[980px] flex-col bg-[#222933] font-['Noto_Sans','Noto_Sans_CJK_SC',sans-serif]">
      <TitleBar />
      <RibbonTabs active={tab} onSelect={setTab} />
      <Ribbon />
      <DocumentTabs />
      <DrawingArea />
      <StatusBar />
    </div>
  )
}
